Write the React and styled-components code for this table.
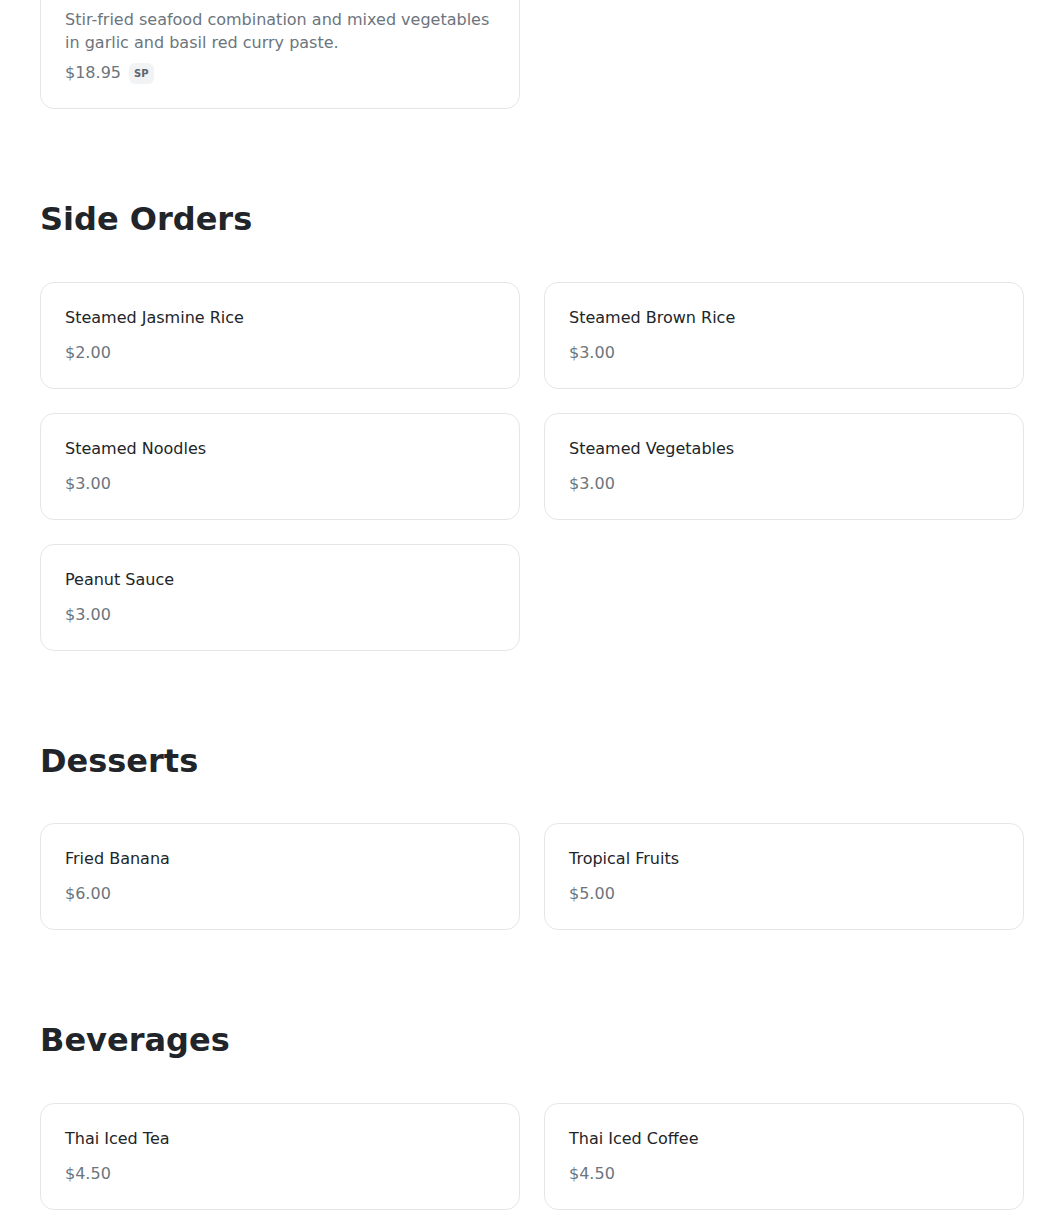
import React from "react";
import styled, { createGlobalStyle } from "styled-components";

const GlobalStyle = createGlobalStyle`
  html, body {
    margin: 0;
    padding: 0;
    background: #ffffff;
  }
  body {
    font-family: "DejaVu Sans", "Liberation Sans", sans-serif;
    color: #212529;
    overflow: hidden;
  }
`;

const Page = styled.main`
  padding: 0 40px 40px;
  display: flex;
  flex-direction: column;
  gap: 91px;
`;

const Section = styled.section`
  display: flex;
  flex-direction: column;
  margin-top: ${(p) => p.$offset || 0}px;
`;

const Heading = styled.h2`
  margin: 0 0 43.5px;
  font-size: 32px;
  line-height: 38px;
  font-weight: 700;
  color: #212529;
`;

const Grid = styled.div`
  display: grid;
  grid-template-columns: repeat(2, 480px);
  gap: 24px;
`;

const Card = styled.article`
  border: 1px solid #e4e6e9;
  border-radius: 14px;
  padding: 23px 24px;
  background: #fff;
  display: flex;
  flex-direction: column;
`;

const Name = styled.h3`
  margin: 0 0 11px;
  font-size: 16px;
  line-height: 24px;
  font-weight: 400;
  color: #212529;
`;

const Description = styled.p`
  margin: 0 0 7px;
  font-size: 16px;
  line-height: 23.2px;
  color: #6c757d;
`;

const PriceRow = styled.div`
  display: flex;
  align-items: center;
  gap: 8px;
  height: 24px;
`;

const Price = styled.span`
  font-size: 16px;
  line-height: 24px;
  color: #6c757d;
`;

const Badge = styled.span`
  display: inline-flex;
  align-items: center;
  justify-content: center;
  height: 21px;
  padding: 0 5px;
  border-radius: 6px;
  background: #f1f3f5;
  color: #5c6670;
  font-size: 10px;
  font-weight: 700;
`;

const sections = [
  {
    offset: -16,
    items: [
      {
        description:
          "Stir-fried seafood combination and mixed vegetables in garlic and basil red curry paste.",
        price: "$18.95",
        badge: "SP",
      },
    ],
  },
  {
    title: "Side Orders",
    items: [
      { name: "Steamed Jasmine Rice", price: "$2.00" },
      { name: "Steamed Brown Rice", price: "$3.00" },
      { name: "Steamed Noodles", price: "$3.00" },
      { name: "Steamed Vegetables", price: "$3.00" },
      { name: "Peanut Sauce", price: "$3.00" },
    ],
  },
  {
    title: "Desserts",
    items: [
      { name: "Fried Banana", price: "$6.00" },
      { name: "Tropical Fruits", price: "$5.00" },
    ],
  },
  {
    title: "Beverages",
    items: [
      { name: "Thai Iced Tea", price: "$4.50" },
      { name: "Thai Iced Coffee", price: "$4.50" },
    ],
  },
];

function MenuCard({ item }) {
  return (
    <Card>
      {item.name && <Name>{item.name}</Name>}
      {item.description && <Description>{item.description}</Description>}
      <PriceRow>
        <Price>{item.price}</Price>
        {item.badge && <Badge>{item.badge}</Badge>}
      </PriceRow>
    </Card>
  );
}

export default function App() {
  return (
    <>
      <GlobalStyle />
      <Page>
        {sections.map((s, i) => (
          <Section key={i} $offset={s.offset}>
            {s.title && <Heading>{s.title}</Heading>}
            <Grid>
              {s.items.map((item, j) => (
                <MenuCard key={j} item={item} />
              ))}
            </Grid>
          </Section>
        ))}
      </Page>
    </>
  );
}
